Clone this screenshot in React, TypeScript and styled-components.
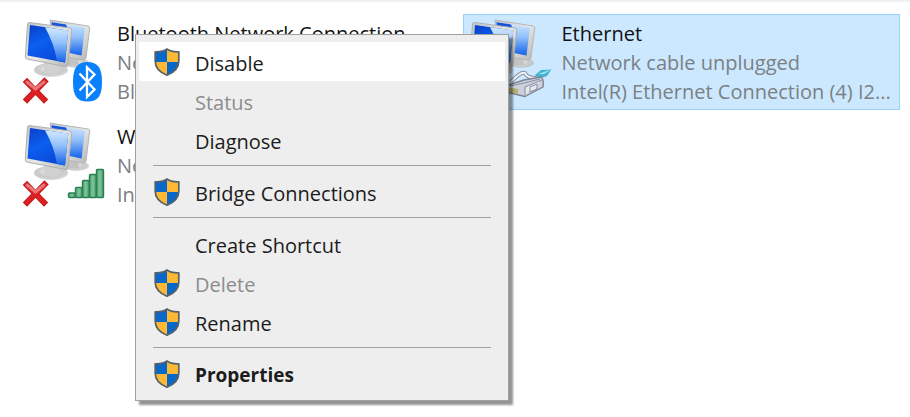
import React, { useId } from "react";
import styled, { createGlobalStyle } from "styled-components";

const GlobalStyle = createGlobalStyle`
  * { box-sizing: border-box; }
  html, body { margin: 0; background: #fff; }
  body, button { font-family: "Open Sans", "Noto Sans", sans-serif; }
`;

const Page = styled.main`
  position: relative;
  min-height: 100vh;
  border-top: 2px solid #f0f1f2;
  padding: 12px 10px 0 18px;
  overflow: hidden;
`;

const ConnectionGrid = styled.div`
  display: grid;
  grid-template-columns: repeat(2, minmax(0, 1fr));
  gap: 7px;
`;

const Tile = styled.button<{ $selected?: boolean }>`
  display: flex;
  align-items: flex-start;
  min-width: 0;
  padding: 0;
  text-align: left;
  border: 1px solid ${(p) => (p.$selected ? "#99d1ff" : "transparent")};
  background: ${(p) => (p.$selected ? "#cce8ff" : "transparent")};
`;

const TileIcon = styled.svg`
  flex: none;
  width: 98px;
  height: 94px;
`;

const TileText = styled.span`
  display: block;
  flex: 1;
  min-width: 0;
  padding-top: 4px;
`;

const Line = styled.span<{ $muted?: boolean }>`
  display: block;
  font-size: 20px;
  line-height: 29px;
  white-space: nowrap;
  overflow: hidden;
  text-overflow: ellipsis;
  color: ${(p) => (p.$muted ? "#7b8084" : "#111")};
`;

const Menu = styled.div`
  position: absolute;
  left: 135px;
  top: 32px;
  width: 374px;
  padding: 7px 3px;
  background: #eee;
  border: 1px solid #a0a0a0;
  box-shadow: 4px 4px 2px rgba(0, 0, 0, 0.42);
`;

const MenuItem = styled.button<{ $active?: boolean; $strong?: boolean }>`
  display: flex;
  align-items: center;
  width: 100%;
  height: 39px;
  padding: 3px 15px 0;
  border: 0;
  background: ${(p) => (p.$active ? "#fff" : "transparent")};
  color: #1c1c1c;
  font-size: ${(p) => (p.$strong ? "19px" : "20px")};
  font-weight: ${(p) => (p.$strong ? 700 : 400)};
  line-height: 29px;
  text-align: left;

  &:disabled { color: #8c8c8c; }
`;

const IconSlot = styled.span`
  display: flex;
  flex: none;
  width: 41px;
`;

const Separator = styled.hr`
  height: 1px;
  margin: 6px 14px;
  border: 0;
  background: #a0a0a0;
`;

const ShieldSvg = styled.svg`
  width: 26px;
  height: 28px;
  margin-top: -3px;
`;

const SHIELD = "M13 1C10 3.3 6 4 1.2 3.8V13C1.2 20 6 24.5 13 27.2C20 24.5 24.8 20 24.8 13V3.8C20 4 16 3.3 13 1Z";

function Shield() {
  const id = useId();
  return (
    <ShieldSvg viewBox="0 0 26 28" aria-hidden="true">
      <clipPath id={id}><path d={SHIELD} /></clipPath>
      <g clipPath={`url(#${id})`}>
        <path fill="#0868c9" d="M0 0h13v14H0zM13 14h13v14H13z" />
        <path fill="#fdb935" d="M13 0h13v14H13zM0 14h13v14H0z" />
      </g>
      <path d={SHIELD} fill="none" stroke="#56616a" strokeWidth="1.7" strokeLinejoin="round" />
    </ShieldSvg>
  );
}

function Monitors() {
  const id = useId();
  return (
    <>
      <defs>
        <linearGradient id={id + "a"} x1="0" y1="0" x2="0.5" y2="1">
          <stop offset="0" stopColor="#0a3fc6" />
          <stop offset="0.5" stopColor="#0b5ff0" />
          <stop offset="1" stopColor="#0a49d8" />
        </linearGradient>
        <linearGradient id={id + "b"} x1="0" y1="0" x2="0" y2="1">
          <stop offset="0" stopColor="#d4e9ff" />
          <stop offset="0.45" stopColor="#8fbffa" />
          <stop offset="1" stopColor="#1260ea" />
        </linearGradient>
        <linearGradient id={id + "c"} x1="0" y1="0" x2="1" y2="1">
          <stop offset="0" stopColor="#bfc4c8" />
          <stop offset="0.5" stopColor="#e8e8e7" />
          <stop offset="1" stopColor="#b4b4b2" />
        </linearGradient>
        <radialGradient id={id + "d"} cx="0.45" cy="0.4" r="0.6">
          <stop offset="0" stopColor="#f0f0f0" />
          <stop offset="0.6" stopColor="#cacaca" />
          <stop offset="1" stopColor="#b4b4b4" stopOpacity="0.5" />
        </radialGradient>
      </defs>
      <ellipse cx="76" cy="63" rx="13" ry="5" fill={`url(#${id}d)`} />
      <path d="M68 54l10 3 1 8H67z" fill="#c2c2c0" />
      <path d="M50 20L88 26Q90 26.500 89.700 28L86 58Q85.500 60.500 83 60L55 55Z" fill={`url(#${id}c)`} stroke="#b4b7b9" strokeWidth="1" />
      <path d="M51.500 22.200L85 27.500L81.500 55.500L55 50Z" fill={`url(#${id}b)`} />
      <path d="M51.500 22.200L66 24.500L68 30L52 27Z" fill="#1752da" />
      <ellipse cx="51" cy="70" rx="17" ry="7" fill={`url(#${id}d)`} />
      <path d="M44 62l16 3-2 7q-6 3-14 0z" fill="#d1d1d0" />
      <path d="M29.500 22.500L70 28Q72 28.500 71.700 30.500L68 64.500Q67.500 67 65 66.500L27 59Q25 58.500 25.300 56.500L27.500 24Q28 22.200 29.500 22.500Z" fill={`url(#${id}c)`} stroke="#adb0b2" strokeWidth="1" />
      <path d="M30 25L68.300 30.500L65 62.500L27.500 55.500Z" fill={`url(#${id}a)`} />
      <path d="M45 27.200L68.300 30.500L65 62.500L57 61Q54 43 45 27.200Z" fill={`url(#${id}b)`} />
    </>
  );
}

function Cross() {
  return (
    <>
      <path d="M27 82L44 99.500M44.500 81.500L27 99.500" fill="none" stroke="#c21c1e" strokeWidth="6" strokeLinecap="square" />
      <path d="M27 82L44 99.500M44.500 81.500L27 99.500" fill="none" stroke="#dc2023" strokeWidth="4" strokeLinecap="square" />
      <path d="M27 82L35.500 89L44 82" fill="none" stroke="#ea7577" strokeWidth="3" strokeLinecap="round" />
    </>
  );
}

function Bluetooth() {
  return (
    <>
      <path d="M87.500 62C98 62 102 68 102 82S98 101.500 87.500 101.500S73 96 73 82S77 62 87.500 62Z" fill="#0a80fb" />
      <path d="M79.500 73.500L94.500 89.500L87 97V67.500L94.500 74.500L79.500 90.500" fill="none" stroke="#fff" strokeWidth="2.300" />
    </>
  );
}

function Signal() {
  const id = useId();
  const bars = [[68, 90], [75, 84.5], [82, 77.5], [89, 71.5], [96, 66.5]];
  return (
    <>
      <linearGradient id={id} x1="0" y1="0" x2="1" y2="0">
        <stop offset="0" stopColor="#4da272" />
        <stop offset="0.5" stopColor="#83c69c" />
        <stop offset="1" stopColor="#3d9464" />
      </linearGradient>
      {bars.map(([x, y]) => (
        <rect key={x} x={x + 0.5} y={y} width="7" height={94.5 - y} rx="1" fill={`url(#${id})`} stroke="#268052" strokeWidth="1.400" />
      ))}
    </>
  );
}

function Plug() {
  return (
    <>
      <path d="M66 82Q76 71 80 73Q82 78 91 78" fill="none" stroke="#8790a0" strokeWidth="4" />
      <path d="M66 82Q76 71 80 73Q82 78 91 78" fill="none" stroke="#eff3f8" strokeWidth="2" />
      <path d="M90 75L96 70L106.500 69.500L102 76L93 79Z" fill="#43b3cf" />
      <path d="M93 74L106 69.500L99 74Z" fill="#a6e4ee" />
      <path d="M61 86L79 80L96 77Q99 79 98 87L80 96.500L61 92Z" fill="#cbd0dc" stroke="#7d8391" strokeWidth="1.400" strokeLinejoin="round" />
      <path d="M65 86L79 83L95 79M80 95V87L97 80M85 92V87L92 84V89Z" fill="#e6e9ef" stroke="#878d9c" strokeWidth="1" />
      <path d="M62 87L73 89V94L62 91.500Z" fill="#b3b370" />
    </>
  );
}

type Connection = { lines: string[]; badge: React.ReactNode; selected?: boolean };

const connections: Connection[] = [
  {
    lines: ["Bluetooth Network Connection", "Not connected", "Bluetooth Device"],
    badge: <><Cross /><Bluetooth /></>,
  },
  {
    lines: ["Ethernet", "Network cable unplugged", "Intel(R) Ethernet Connection (4) I2..."],
    badge: <Plug />,
    selected: true,
  },
  {
    lines: ["Wi-Fi", "Not connected", "Intel(R) Wireless"],
    badge: <><Cross /><Signal /></>,
  },
];

export default function App() {
  return (
    <>
      <GlobalStyle />
      <Page>
        <ConnectionGrid>
          {connections.map(({ lines, badge, selected }) => (
            <Tile key={lines[0]} type="button" $selected={selected}>
              <TileIcon viewBox="19 15 98 94" aria-hidden="true">
                <Monitors />
                {badge}
              </TileIcon>
              <TileText>
                {lines.map((line, i) => <Line key={i} $muted={i > 0}>{line}</Line>)}
              </TileText>
            </Tile>
          ))}
        </ConnectionGrid>
        <Menu role="menu">
          <MenuItem role="menuitem" $active><IconSlot><Shield /></IconSlot>Disable</MenuItem>
          <MenuItem role="menuitem" disabled><IconSlot />Status</MenuItem>
          <MenuItem role="menuitem"><IconSlot />Diagnose</MenuItem>
          <Separator />
          <MenuItem role="menuitem"><IconSlot><Shield /></IconSlot>Bridge Connections</MenuItem>
          <Separator />
          <MenuItem role="menuitem"><IconSlot />Create Shortcut</MenuItem>
          <MenuItem role="menuitem" disabled><IconSlot><Shield /></IconSlot>Delete</MenuItem>
          <MenuItem role="menuitem"><IconSlot><Shield /></IconSlot>Rename</MenuItem>
          <Separator />
          <MenuItem role="menuitem" $strong><IconSlot><Shield /></IconSlot>Properties</MenuItem>
        </Menu>
      </Page>
    </>
  );
}
